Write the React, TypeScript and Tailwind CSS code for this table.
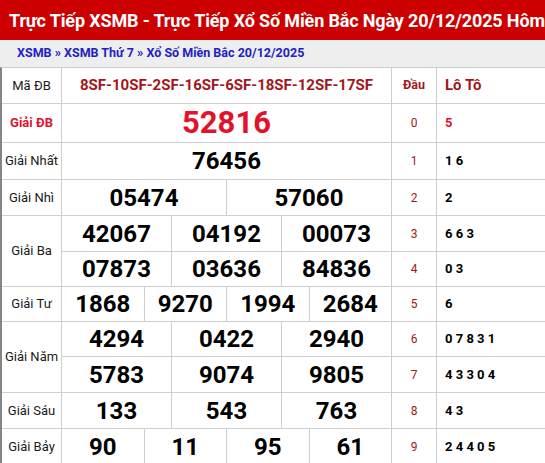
import React from "react";

const prizes = [
  { label: "Giải ĐB", rows: [["52816"]], special: true },
  { label: "Giải Nhất", rows: [["76456"]] },
  { label: "Giải Nhì", rows: [["05474", "57060"]] },
  {
    label: "Giải Ba",
    rows: [
      ["42067", "04192", "00073"],
      ["07873", "03636", "84836"],
    ],
  },
  { label: "Giải Tư", rows: [["1868", "9270", "1994", "2684"]] },
  {
    label: "Giải Năm",
    rows: [
      ["4294", "0422", "2940"],
      ["5783", "9074", "9805"],
    ],
  },
  { label: "Giải Sáu", rows: [["133", "543", "763"]] },
  { label: "Giải Bảy", rows: [["90", "11", "95", "61"]] },
];

const loto = ["5", "1 6", "2", "6 6 3", "0 3", "6", "0 7 8 3 1", "4 3 3 0 4", "4 3", "2 4 4 0 5"];

const line = "border-b border-[#cfcfcf]";

export default function App() {
  const cells: React.ReactNode[] = [];
  let k = 0;

  prizes.forEach((p, pi) => {
    p.rows.forEach((nums, j) => {
      if (j === 0) {
        cells.push(
          <div
            key={`l${pi}`}
            className={`${line} border-r flex items-center justify-center text-[13px] ${
              p.special ? "text-[#e3112c] font-bold text-[12.5px]" : "text-[#1a1a1a]"
            } ${p.rows.length === 2 ? "row-span-2" : ""}`}
          >
            {p.label}
          </div>
        );
      }
      cells.push(
        <div key={`n${pi}-${j}`} className={`${line} border-r flex`}>
          {nums.map((n, i) => (
            <div
              key={i}
              className={`flex-1 flex items-center justify-center font-bold ${
                i < nums.length - 1 ? "border-r border-[#cfcfcf]" : ""
              } ${p.special ? "text-[31px] text-[#e3112c]" : "text-[24px] text-black"}`}
            >
              {n}
            </div>
          ))}
        </div>
      );
      cells.push(
        <div key={`d${k}`} className={`${line} border-r flex items-center justify-center text-[12px] text-[#a3161c]`}>
          {k}
        </div>
      );
      cells.push(
        <div
          key={`t${k}`}
          className={`${line} flex items-center pl-[8px] text-[13px] font-bold whitespace-pre ${
            k === 0 ? "text-[#e3112c]" : "text-black"
          }`}
        >
          {loto[k]}
        </div>
      );
      k++;
    });
  });

  return (
    <div className="w-[545px] h-[463px] overflow-hidden bg-white font-['Roboto',sans-serif]">
      <div className="h-[40px] bg-[#cc0000] flex items-center pl-[9px] whitespace-nowrap overflow-hidden">
        <h1 className="text-white font-bold text-[18px] tracking-[-0.15px]">
          Trực Tiếp XSMB - Trực Tiếp Xổ Số Miền Bắc Ngày 20/12/2025 Hôm
        </h1>
      </div>
      <div className="h-[27px] bg-[#eeeeee] flex items-center pl-[17px] text-[12.5px] font-bold text-[#2222c4]">
        XSMB » XSMB Thứ 7 » Xổ Số Miền Bắc 20/12/2025
      </div>
      <div className="grid grid-cols-[60px_330px_45px_1fr] grid-rows-[36px_39px_37px_36px_36px_35px_35px_35px_36px_36px_36px] border-t border-l-2 border-t-[#cfcfcf] border-l-[#858585] [&>div]:border-[#cfcfcf]">
        <div className={`${line} border-r flex items-center justify-center text-[13px] text-[#1a1a1a]`}>Mã ĐB</div>
        <div className={`${line} border-r flex items-center justify-center text-[15px] font-bold text-[#a3161c]`}>
          8SF-10SF-2SF-16SF-6SF-18SF-12SF-17SF
        </div>
        <div className={`${line} border-r flex items-center justify-center text-[12.5px] font-bold text-[#a3161c]`}>Đầu</div>
        <div className={`${line} flex items-center pl-[8px] text-[15px] font-bold text-[#a3161c]`}>Lô Tô</div>
        {cells}
      </div>
    </div>
  );
}
